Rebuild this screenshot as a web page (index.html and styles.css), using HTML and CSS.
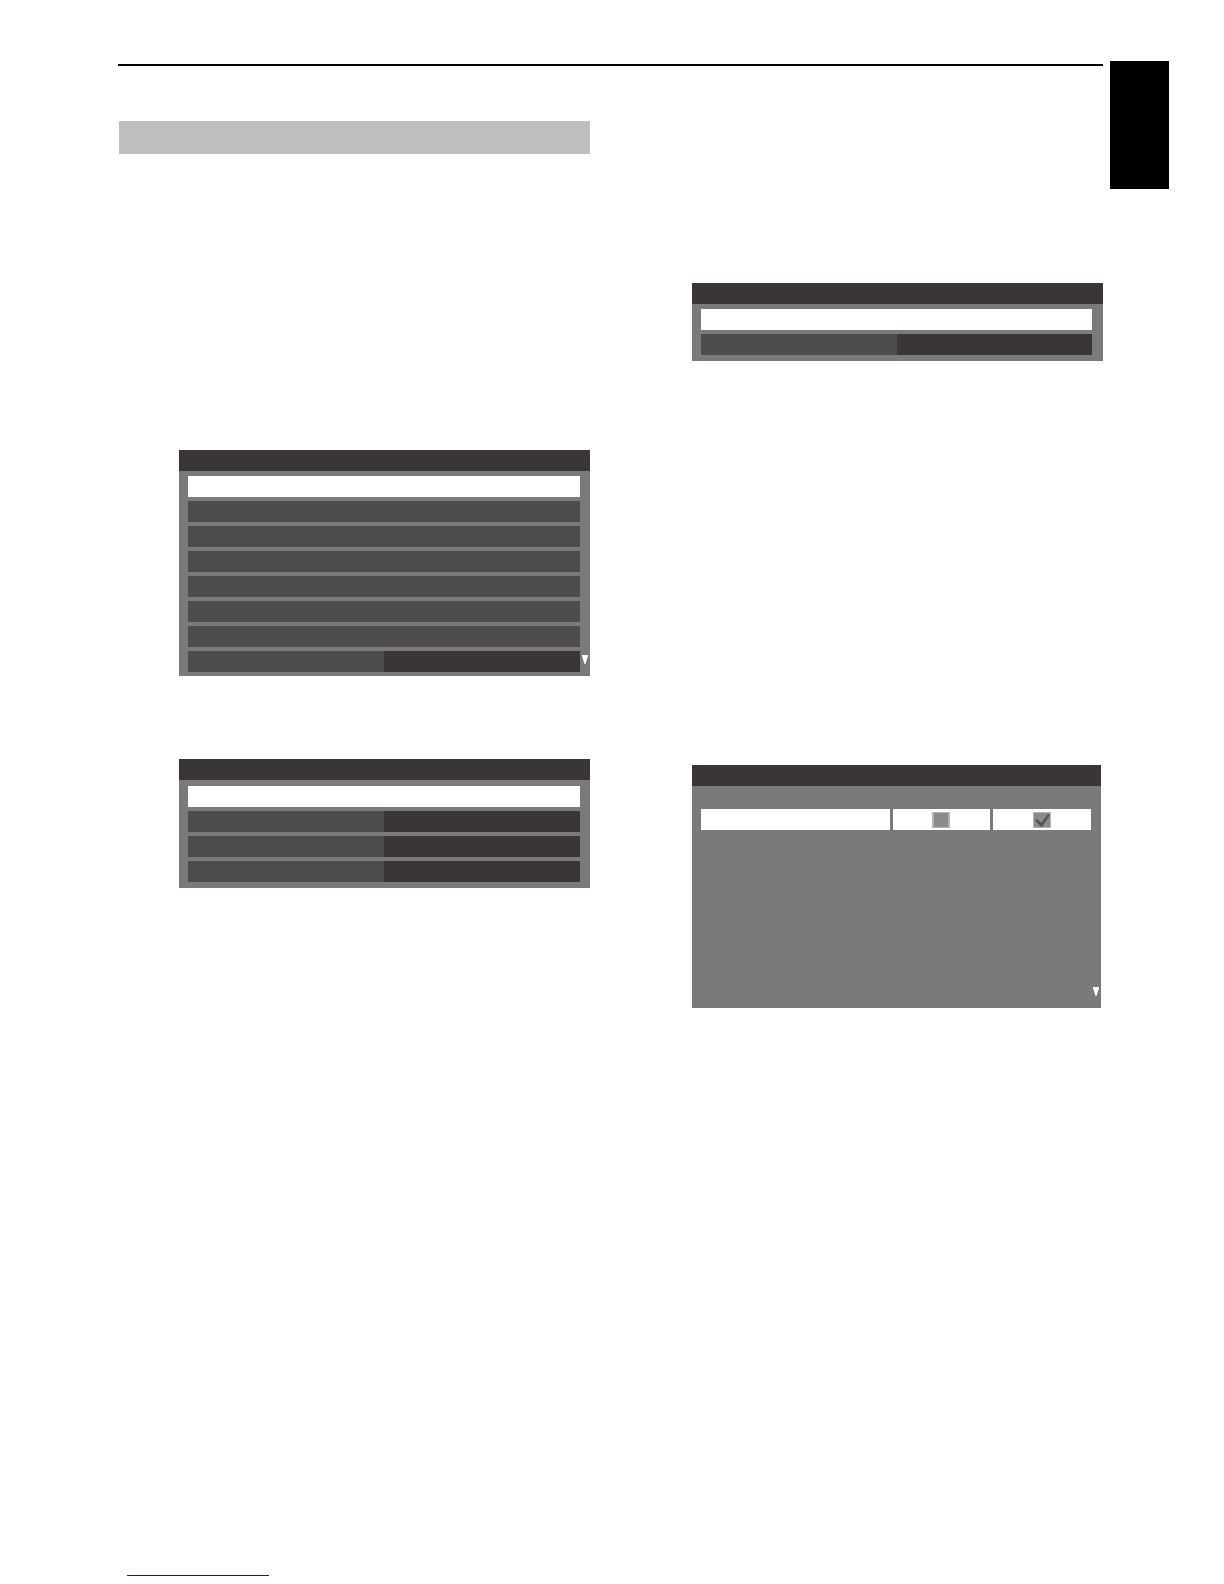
FILE: index.html
```html
<!DOCTYPE html>
<html lang="en">

<head>
    <meta charset="UTF-8">
    <title>manual</title>
    <link rel="stylesheet" href="styles.css">
</head>

<body>
    <div class="page">
        <main class="content">
            <section class="column-left">
                <div class="heading"></div>

                <div class="menu menu-first">
                    <div class="menu-title"></div>
                    <ul class="menu-rows">
                        <li class="row selected"></li>
                        <li class="row"></li>
                        <li class="row"></li>
                        <li class="row"></li>
                        <li class="row"></li>
                        <li class="row"></li>
                        <li class="row"></li>
                        <li class="row split"><span class="value"></span></li>
                    </ul>
                    <svg class="more" viewBox="0 0 6 9"><path d="M0 0H6V1L3.5 9H2.5L0 1Z"/></svg>
                </div>

                <div class="menu menu-second">
                    <div class="menu-title"></div>
                    <ul class="menu-rows roomy">
                        <li class="row selected"></li>
                        <li class="row split"><span class="value"></span></li>
                        <li class="row split"><span class="value"></span></li>
                        <li class="row split"><span class="value"></span></li>
                    </ul>
                </div>
            </section>

            <section class="column-right">
                <div class="menu menu-third">
                    <div class="menu-title"></div>
                    <ul class="menu-rows short">
                        <li class="row selected"></li>
                        <li class="row split"><span class="value"></span></li>
                    </ul>
                </div>

                <div class="menu menu-checks">
                    <div class="menu-title"></div>
                    <div class="check-row">
                        <div class="cell"></div>
                        <label class="cell">
                            <input type="checkbox" class="box" aria-label="Off">
                        </label>
                        <label class="cell">
                            <input type="checkbox" class="box" aria-label="On" checked>
                            <svg class="tick" viewBox="0 0 18 16"><path d="M2 8L4 7L8 11L15 2L17 3L9 15H8Z"/></svg>
                        </label>
                    </div>
                    <svg class="more" viewBox="0 0 6 9"><path d="M0 0H6V1L3.5 9H2.5L0 1Z"/></svg>
                </div>
            </section>
        </main>
        <aside class="side-tab"></aside>
    </div>

    <footer class="footer">
        <a href="#" class="footer-link" aria-label="Home"></a>
    </footer>
</body>

</html>
```

FILE: styles.css
```css
* {
    margin: 0;
    padding: 0;
    box-sizing: border-box;
}

body {
    display: flex;
    flex-direction: column;
    min-height: 100vh;
    background-color: #fff;
    font-family: "Liberation Sans", Arial, sans-serif;
}

.page {
    display: flex;
    align-items: flex-start;
    gap: 7px;
    padding: 61px 55px 0 118px;
}

.content {
    flex: 1;
    display: grid;
    grid-template-columns: 471fr 411fr;
    column-gap: 102px;
    margin-top: 3px;
    padding-left: 1px;
    border-top: 2px solid #000;
}

.side-tab {
    width: 59px;
    height: 128px;
    background-color: #000;
}

.heading {
    height: 33px;
    margin-top: 55px;
    background-color: #bfbfbf;
}

/* on-screen menus */
.menu {
    position: relative;
    background-color: #7b7979;
}

.menu-first {
    margin: 296px 0 0 60px;
}

.menu-second {
    margin: 83px 0 0 60px;
}

.menu-third {
    margin-top: 217px;
}

.menu-checks {
    min-height: 243px;
    margin: 404px 2px 0 0;
}

.menu-title {
    height: 21px;
    background-color: #3a3637;
}

.menu-rows {
    display: grid;
    gap: 4px;
    padding: 5px 10px 4px 9px;
    list-style: none;
}

.menu-rows.roomy {
    padding-top: 6px;
    padding-bottom: 6px;
}

.menu-rows.short {
    padding-right: 11px;
    padding-bottom: 6px;
}

.row {
    height: 21px;
    background-color: #4e4c4d;
}

.row.selected {
    background-color: #fff;
}

.row.split {
    display: flex;
    justify-content: flex-end;
}

.value {
    width: 50%;
    background-color: #3a3536;
}

/* little arrow over the right edge: more items below */
.more {
    position: absolute;
    right: 2px;
    bottom: 12px;
    width: 6px;
    height: 9px;
    fill: #fff;
}

.check-row {
    display: grid;
    grid-template-columns: 189fr 98fr 98fr;
    column-gap: 3px;
    padding: 23px 10px 0 9px;
}

.cell {
    position: relative;
    display: flex;
    align-items: center;
    justify-content: center;
    height: 21px;
    background-color: #fff;
}

.box {
    appearance: none;
    width: 18px;
    height: 16px;
    border: 1px solid #b5b3b3;
    background-color: #8c8a8b;
}

.box:not(:checked) {
    border-width: 1px 2px;
}

.tick {
    position: absolute;
    width: 18px;
    height: 16px;
    fill: #555354;
    pointer-events: none;
}

.footer {
    margin-top: auto;
    padding: 0 127px 8px;
}

.footer-link {
    display: block;
    width: 142px;
    border-bottom: 1px solid #1414a0;
}
```
